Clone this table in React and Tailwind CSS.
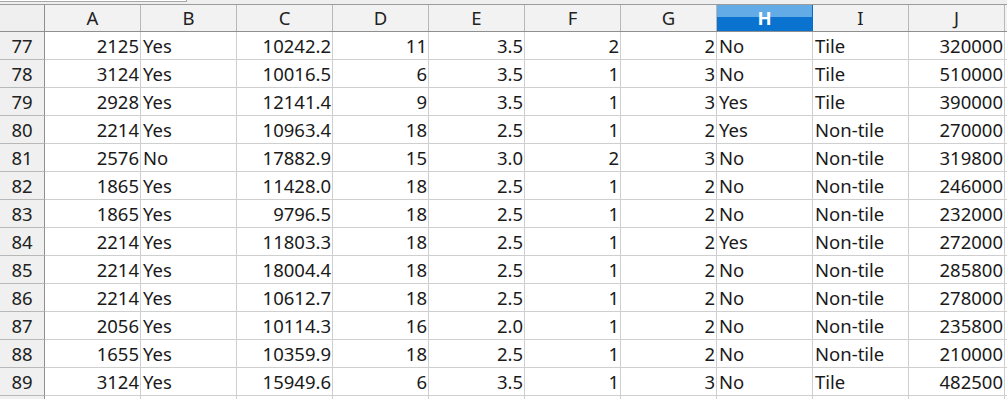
import React from 'react';

const columns = ['A', 'B', 'C', 'D', 'E', 'F', 'G', 'H', 'I', 'J'];

// which columns are text (left aligned)
const textCols = [1, 7, 8];

const rows = [
  [77, '2125', 'Yes', '10242.2', '11', '3.5', '2', '2', 'No', 'Tile', '320000'],
  [78, '3124', 'Yes', '10016.5', '6', '3.5', '1', '3', 'No', 'Tile', '510000'],
  [79, '2928', 'Yes', '12141.4', '9', '3.5', '1', '3', 'Yes', 'Tile', '390000'],
  [80, '2214', 'Yes', '10963.4', '18', '2.5', '1', '2', 'Yes', 'Non-tile', '270000'],
  [81, '2576', 'No', '17882.9', '15', '3.0', '2', '3', 'No', 'Non-tile', '319800'],
  [82, '1865', 'Yes', '11428.0', '18', '2.5', '1', '2', 'No', 'Non-tile', '246000'],
  [83, '1865', 'Yes', '9796.5', '18', '2.5', '1', '2', 'No', 'Non-tile', '232000'],
  [84, '2214', 'Yes', '11803.3', '18', '2.5', '1', '2', 'Yes', 'Non-tile', '272000'],
  [85, '2214', 'Yes', '18004.4', '18', '2.5', '1', '2', 'No', 'Non-tile', '285800'],
  [86, '2214', 'Yes', '10612.7', '18', '2.5', '1', '2', 'No', 'Non-tile', '278000'],
  [87, '2056', 'Yes', '10114.3', '16', '2.0', '1', '2', 'No', 'Non-tile', '235800'],
  [88, '1655', 'Yes', '10359.9', '18', '2.5', '1', '2', 'No', 'Non-tile', '210000'],
  [89, '3124', 'Yes', '15949.6', '6', '3.5', '1', '3', 'No', 'Tile', '482500'],
  [90, '', '', '', '', '', '', '', '', '', ''],
];

const gridCols = 'grid grid-cols-[45px_repeat(10,96px)_1fr]';

const App = () => {
  return (
    <div
      className="w-[1007px] h-[399px] overflow-hidden bg-white text-[18.5px] text-[#1a1a1a]"
      style={{ fontFamily: '"Noto Sans", "Open Sans", sans-serif' }}
    >
      {/* strip above the sheet */}
      <div className="h-[4px] bg-[#efefef] border-b border-[#9c9c9c] box-content">
        <div className="w-[187px] h-[2px] bg-white border-r border-b border-[#a8a8a8]" />
      </div>

      {/* column headers */}
      <div className={`${gridCols} h-[26px] border-b border-[#8f8f8f] box-content`}>
        <div className="bg-[#efefef] border-r border-[#8f8f8f]" />
        {columns.map((c) =>
          c === 'H' ? (
            <div
              key={c}
              className="flex items-center justify-center border-r border-[#0a6cc2] bg-[linear-gradient(to_bottom,#62abe6_0,#62abe6_46%,#0a73cf_46%,#0a73cf_100%)] text-white font-bold leading-none"
            >
              {c}
            </div>
          ) : (
            <div
              key={c}
              className="flex items-center justify-center border-r border-[#b8b8b8] bg-[#f2f2f2] text-[#222] leading-none"
            >
              {c}
            </div>
          )
        )}
        <div className="bg-[#f2f2f2]" />
      </div>

      {/* data rows */}
      {rows.map((r) => (
        <div key={r[0]} className={`${gridCols} h-[28px]`}>
          <div className="flex items-center justify-center bg-[#f0f0f0] border-r border-[#8f8f8f] border-b border-b-[#b8b8b8] text-[#222] leading-none pt-[1px]">
            {r[10] === '' && r[1] === '' ? '' : r[0]}
          </div>
          {r.slice(1).map((v, i) => (
            <div
              key={i}
              className={`flex items-center border-r border-b border-[#cfcfcf] leading-none whitespace-nowrap overflow-hidden pt-[1px] ${
                textCols.includes(i) ? 'justify-start pl-[2px]' : 'justify-end pr-[1px]'
              }`}
            >
              {v}
            </div>
          ))}
          <div className="border-b border-[#cfcfcf]" />
        </div>
      ))}
    </div>
  );
};

export default App;
